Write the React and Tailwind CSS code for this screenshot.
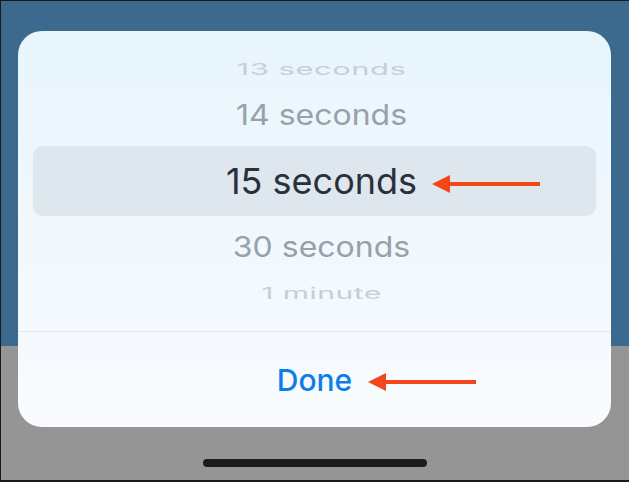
import React from "react";

// red callout arrow pointing left
const Arrow = ({ className }) => (
  <svg className={className} width="108" height="20" viewBox="0 0 108 20">
    <polygon points="0,10 18,1 18,19" fill="#f2471a" />
    <rect x="14" y="8" width="94" height="4" fill="#f2471a" />
  </svg>
);

const rows = [
  { label: "13 seconds", h: "h-[34px]", cls: "text-[31px] text-[#c6cfd6] scale-y-[0.53] tracking-[0.5px]" },
  { label: "14 seconds", h: "h-[60px]", cls: "text-[32px] text-[#98a1a9] scale-y-[0.9]" },
];

const rowsBelow = [
  { label: "30 seconds", h: "h-[62px]", cls: "text-[32px] text-[#98a1a9] scale-y-[0.9]" },
  { label: "1 minute", h: "h-[30px]", cls: "text-[30px] text-[#c6cfd6] scale-y-[0.53] tracking-[0.5px]" },
];

const PickerRow = ({ label, h, cls }) => (
  <div className={`${h} flex items-center justify-center pl-[14px]`}>
    <span className={`leading-none ${cls}`}>{label}</span>
  </div>
);

export default function App() {
  return (
    <div
      className="w-[629px] h-[482px] overflow-hidden border-t border-l border-b-2 border-[#1a1a1a] bg-[linear-gradient(to_bottom,#3b6a8e_345px,#959595_345px)] pt-[30px] pl-[17px] flex flex-col"
      style={{ fontFamily: "Inter, 'Noto Sans', sans-serif" }}
    >
      {/* sheet */}
      <div className="relative w-[593px] h-[396px] rounded-[24px] bg-gradient-to-b from-[#e8f5fd] to-[#f9fbfe] flex flex-col overflow-hidden">
        <div className="h-[300px] pt-[20px] flex flex-col">
          {rows.map((r) => (
            <PickerRow key={r.label} {...r} />
          ))}
          <div className="mt-px mx-[15px] h-[70px] rounded-[10px] bg-[#dee6ee] flex items-center justify-center pl-[14px]">
            <span className="leading-none text-[36px] text-[#2a3038]">15 seconds</span>
          </div>
          {rowsBelow.map((r) => (
            <PickerRow key={r.label} {...r} />
          ))}
        </div>
        <div className="h-px bg-[#e2eaf0]" />
        <div className="flex-1 flex items-center justify-center">
          <span className="leading-none text-[30px] font-medium text-[#0b7ee8]">Done</span>
        </div>

        <Arrow className="absolute left-[414px] top-[143px]" />
        <Arrow className="absolute left-[350px] top-[341px]" />
      </div>

      {/* home indicator */}
      <div className="mt-[32px] ml-[185px] w-[224px] h-[8px] rounded-full bg-[#1c1c1c]" />
    </div>
  );
}
